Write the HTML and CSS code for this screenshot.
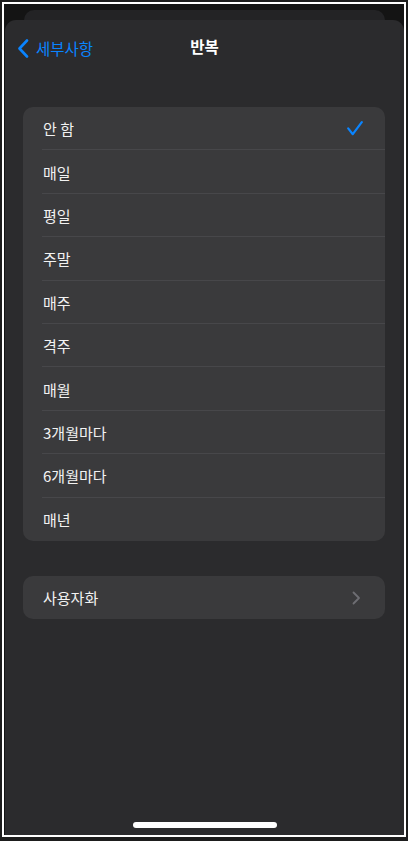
FILE: index.html
```html
<html>
    <head>
        <meta charset="UTF-8">
        <link rel="stylesheet" href="styles.css">
    </head>

    <body>
        <div class="frame">
            <div class="back-card"></div>

            <div class="sheet">
                <div class="nav">
                    <div class="nav-back">
                        <svg class="back-icon" width="12" height="19" viewBox="0 0 12 19">
                            <path d="M10 1.5 L2.5 9.5 L10 17.5" fill="none" stroke="#0a84ff" stroke-width="2.6" stroke-linecap="round" stroke-linejoin="round"/>
                        </svg>
                        <span>세부사항</span>
                    </div>
                    <div class="nav-title">반복</div>
                </div>

                <div class="group">
                    <div class="row">
                        <span>안 함</span>
                        <svg class="check" width="16" height="15" viewBox="0 0 16 15">
                            <path d="M1.2 7.4 L5.8 13.2 L14.8 1.2" fill="none" stroke="#0a84ff" stroke-width="2.2" stroke-linecap="round" stroke-linejoin="round"/>
                        </svg>
                    </div>
                    <div class="row"><span>매일</span></div>
                    <div class="row"><span>평일</span></div>
                    <div class="row"><span>주말</span></div>
                    <div class="row"><span>매주</span></div>
                    <div class="row"><span>격주</span></div>
                    <div class="row"><span>매월</span></div>
                    <div class="row"><span>3개월마다</span></div>
                    <div class="row"><span>6개월마다</span></div>
                    <div class="row"><span>매년</span></div>
                </div>

                <div class="group second">
                    <div class="row">
                        <span>사용자화</span>
                        <svg class="chevron" width="9" height="14" viewBox="0 0 9 14">
                            <path d="M1.5 1.5 L7 7 L1.5 12.5" fill="none" stroke="#6e6e73" stroke-width="1.8" stroke-linecap="round" stroke-linejoin="round"/>
                        </svg>
                    </div>
                </div>

                <div class="home-indicator"></div>
            </div>
        </div>
    </body>
</html>
```

FILE: styles.css
```css
body {
    margin: 0;
    background-color: #1d1d1d;
    font-family: "Noto Sans CJK KR", "Noto Sans", sans-serif;
}

.frame {
    box-sizing: border-box;
    width: 404px;
    height: 835px;
    margin: 2px 0 0 2px;
    border: 2px solid #fff;
    background-color: #141414;
    display: flex;
    flex-direction: column;
    overflow: hidden;
}

.back-card {
    height: 10px;
    margin: 6px 19px 0 20px;
    background-color: #232325;
    border-radius: 10px 10px 0 0;
    flex-shrink: 0;
}

.sheet {
    flex: 1;
    margin: 0 0 0 1px;
    background-color: #2b2b2d;
    border-radius: 11px 11px 0 0;
    display: flex;
    flex-direction: column;
}

.nav {
    height: 52px;
    display: flex;
    align-items: center;
    justify-content: center;
    position: relative;
    flex-shrink: 0;
}

.nav-back {
    position: absolute;
    left: 12px;
    top: 17px;
    display: flex;
    align-items: center;
    gap: 7px;
    color: #0a84ff;
    font-size: 15.5px;
}

.back-icon {
    display: block;
}

.nav-title {
    color: #fff;
    font-size: 15.5px;
    font-weight: bold;
}

.group {
    margin: 35px 19px 0 18px;
    background-color: #3a3a3c;
    border-radius: 10px;
    overflow: hidden;
}

.group.second {
    margin-top: 35px;
}

.row {
    height: 43.4px;
    padding: 0 22px 0 20px;
    display: flex;
    align-items: center;
    justify-content: space-between;
    color: #f2f2f2;
    font-size: 15px;
    position: relative;
}

.row::after {
    content: "";
    position: absolute;
    left: 19px;
    right: 0;
    bottom: 0;
    height: 1px;
    background-color: #47474a;
}

.row:last-child::after {
    display: none;
}

.chevron {
    margin-right: 2px;
}

.home-indicator {
    width: 144px;
    height: 6px;
    margin: auto auto 7px auto;
    background-color: #fff;
    border-radius: 3px;
}
```
